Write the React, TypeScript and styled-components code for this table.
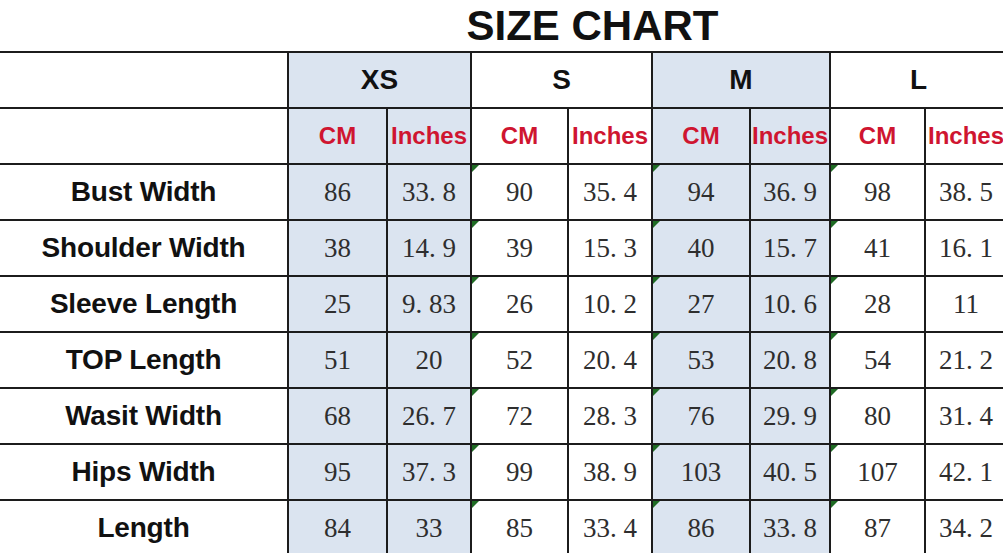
import React from "react";
import styled, { createGlobalStyle } from "styled-components";

const Global = createGlobalStyle`
  html, body { margin: 0; padding: 0; background: #fff; overflow: hidden; }
  body { width: 1003px; height: 553px; }
`;

const Page = styled.div`
  width: 1003px;
  height: 553px;
  overflow: hidden;
  display: flex;
  flex-direction: column;
`;

const Title = styled.h1`
  margin: 0;
  height: 51px;
  flex: none;
  padding-left: 182px;
  display: flex;
  justify-content: center;
  align-items: center;
  font-family: "Liberation Sans", Arial, sans-serif;
  font-weight: 700;
  font-size: 42px;
  line-height: 48px;
  color: #111;
`;

const Grid = styled.div`
  display: grid;
  grid-template-columns: 289px 99px 84px 97px 84px 98px 80px 95px 82px;
  grid-auto-rows: 56px;
  border-top: 2px solid #1c1c1c;
  width: 1008px;
  flex: none;
`;

const Cell = styled.div<{ $blue?: boolean; $span?: number }>`
  position: relative;
  box-sizing: border-box;
  border-right: 2px solid #1c1c1c;
  border-bottom: 2px solid #1c1c1c;
  background: ${(p) => (p.$blue ? "#dbe4f0" : "#fff")};
  grid-column: span ${(p) => p.$span ?? 1};
  display: flex;
  align-items: center;
  justify-content: center;
  white-space: nowrap;
  overflow: visible;
`;

const LabelText = styled.span`
  font-family: "Liberation Sans", Arial, sans-serif;
  font-weight: 700;
  font-size: 28px;
  letter-spacing: -0.2px;
  color: #111;
`;

const SizeText = styled.span`
  font-family: "Liberation Sans", Arial, sans-serif;
  font-weight: 700;
  font-size: 28px;
  color: #111;
`;

const UnitText = styled.span`
  font-family: "Liberation Sans", Arial, sans-serif;
  font-weight: 700;
  font-size: 24px;
  color: #cf1530;
`;

const NumText = styled.span`
  font-family: "Liberation Serif", "Times New Roman", serif;
  font-size: 27px;
  color: #2e2e2e;
  white-space: pre;
`;

const Flag = styled.span`
  position: absolute;
  top: 0;
  left: 0;
  width: 0;
  height: 0;
  border-top: 7px solid #1f6b24;
  border-right: 7px solid transparent;
`;

const sizes = ["XS", "S", "M", "L"];
const blueSize = (i: number) => i === 0 || i === 2;

const rows: [string, string[]][] = [
  ["Bust Width", ["86", "33.8", "90", "35.4", "94", "36.9", "98", "38.5"]],
  ["Shoulder Width", ["38", "14.9", "39", "15.3", "40", "15.7", "41", "16.1"]],
  ["Sleeve Length", ["25", "9.83", "26", "10.2", "27", "10.6", "28", "11"]],
  ["TOP Length", ["51", "20", "52", "20.4", "53", "20.8", "54", "21.2"]],
  ["Wasit Width", ["68", "26.7", "72", "28.3", "76", "29.9", "80", "31.4"]],
  ["Hips Width", ["95", "37.3", "99", "38.9", "103", "40.5", "107", "42.1"]],
  ["Length", ["84", "33", "85", "33.4", "86", "33.8", "87", "34.2"]],
];

export default function App() {
  return (
    <Page>
      <Global />
      <Title>SIZE CHART</Title>
      <Grid>
        <Cell />
        {sizes.map((s, i) => (
          <Cell key={s} $span={2} $blue={blueSize(i)}>
            <SizeText>{s}</SizeText>
          </Cell>
        ))}
        <Cell />
        {sizes.map((s, i) => (
          <React.Fragment key={s + "u"}>
            <Cell $blue={blueSize(i)}>
              <UnitText>CM</UnitText>
            </Cell>
            <Cell $blue={blueSize(i)}>
              <UnitText>Inches</UnitText>
            </Cell>
          </React.Fragment>
        ))}
        {rows.map(([label, vals]) => (
          <React.Fragment key={label}>
            <Cell>
              <LabelText>{label}</LabelText>
            </Cell>
            {vals.map((v, j) => {
              const si = Math.floor(j / 2);
              const flag = j % 2 === 0 && si > 0;
              return (
                <Cell key={j} $blue={blueSize(si)}>
                  {flag && <Flag />}
                  <NumText>{v.replace(".", ". ")}</NumText>
                </Cell>
              );
            })}
          </React.Fragment>
        ))}
      </Grid>
    </Page>
  );
}
